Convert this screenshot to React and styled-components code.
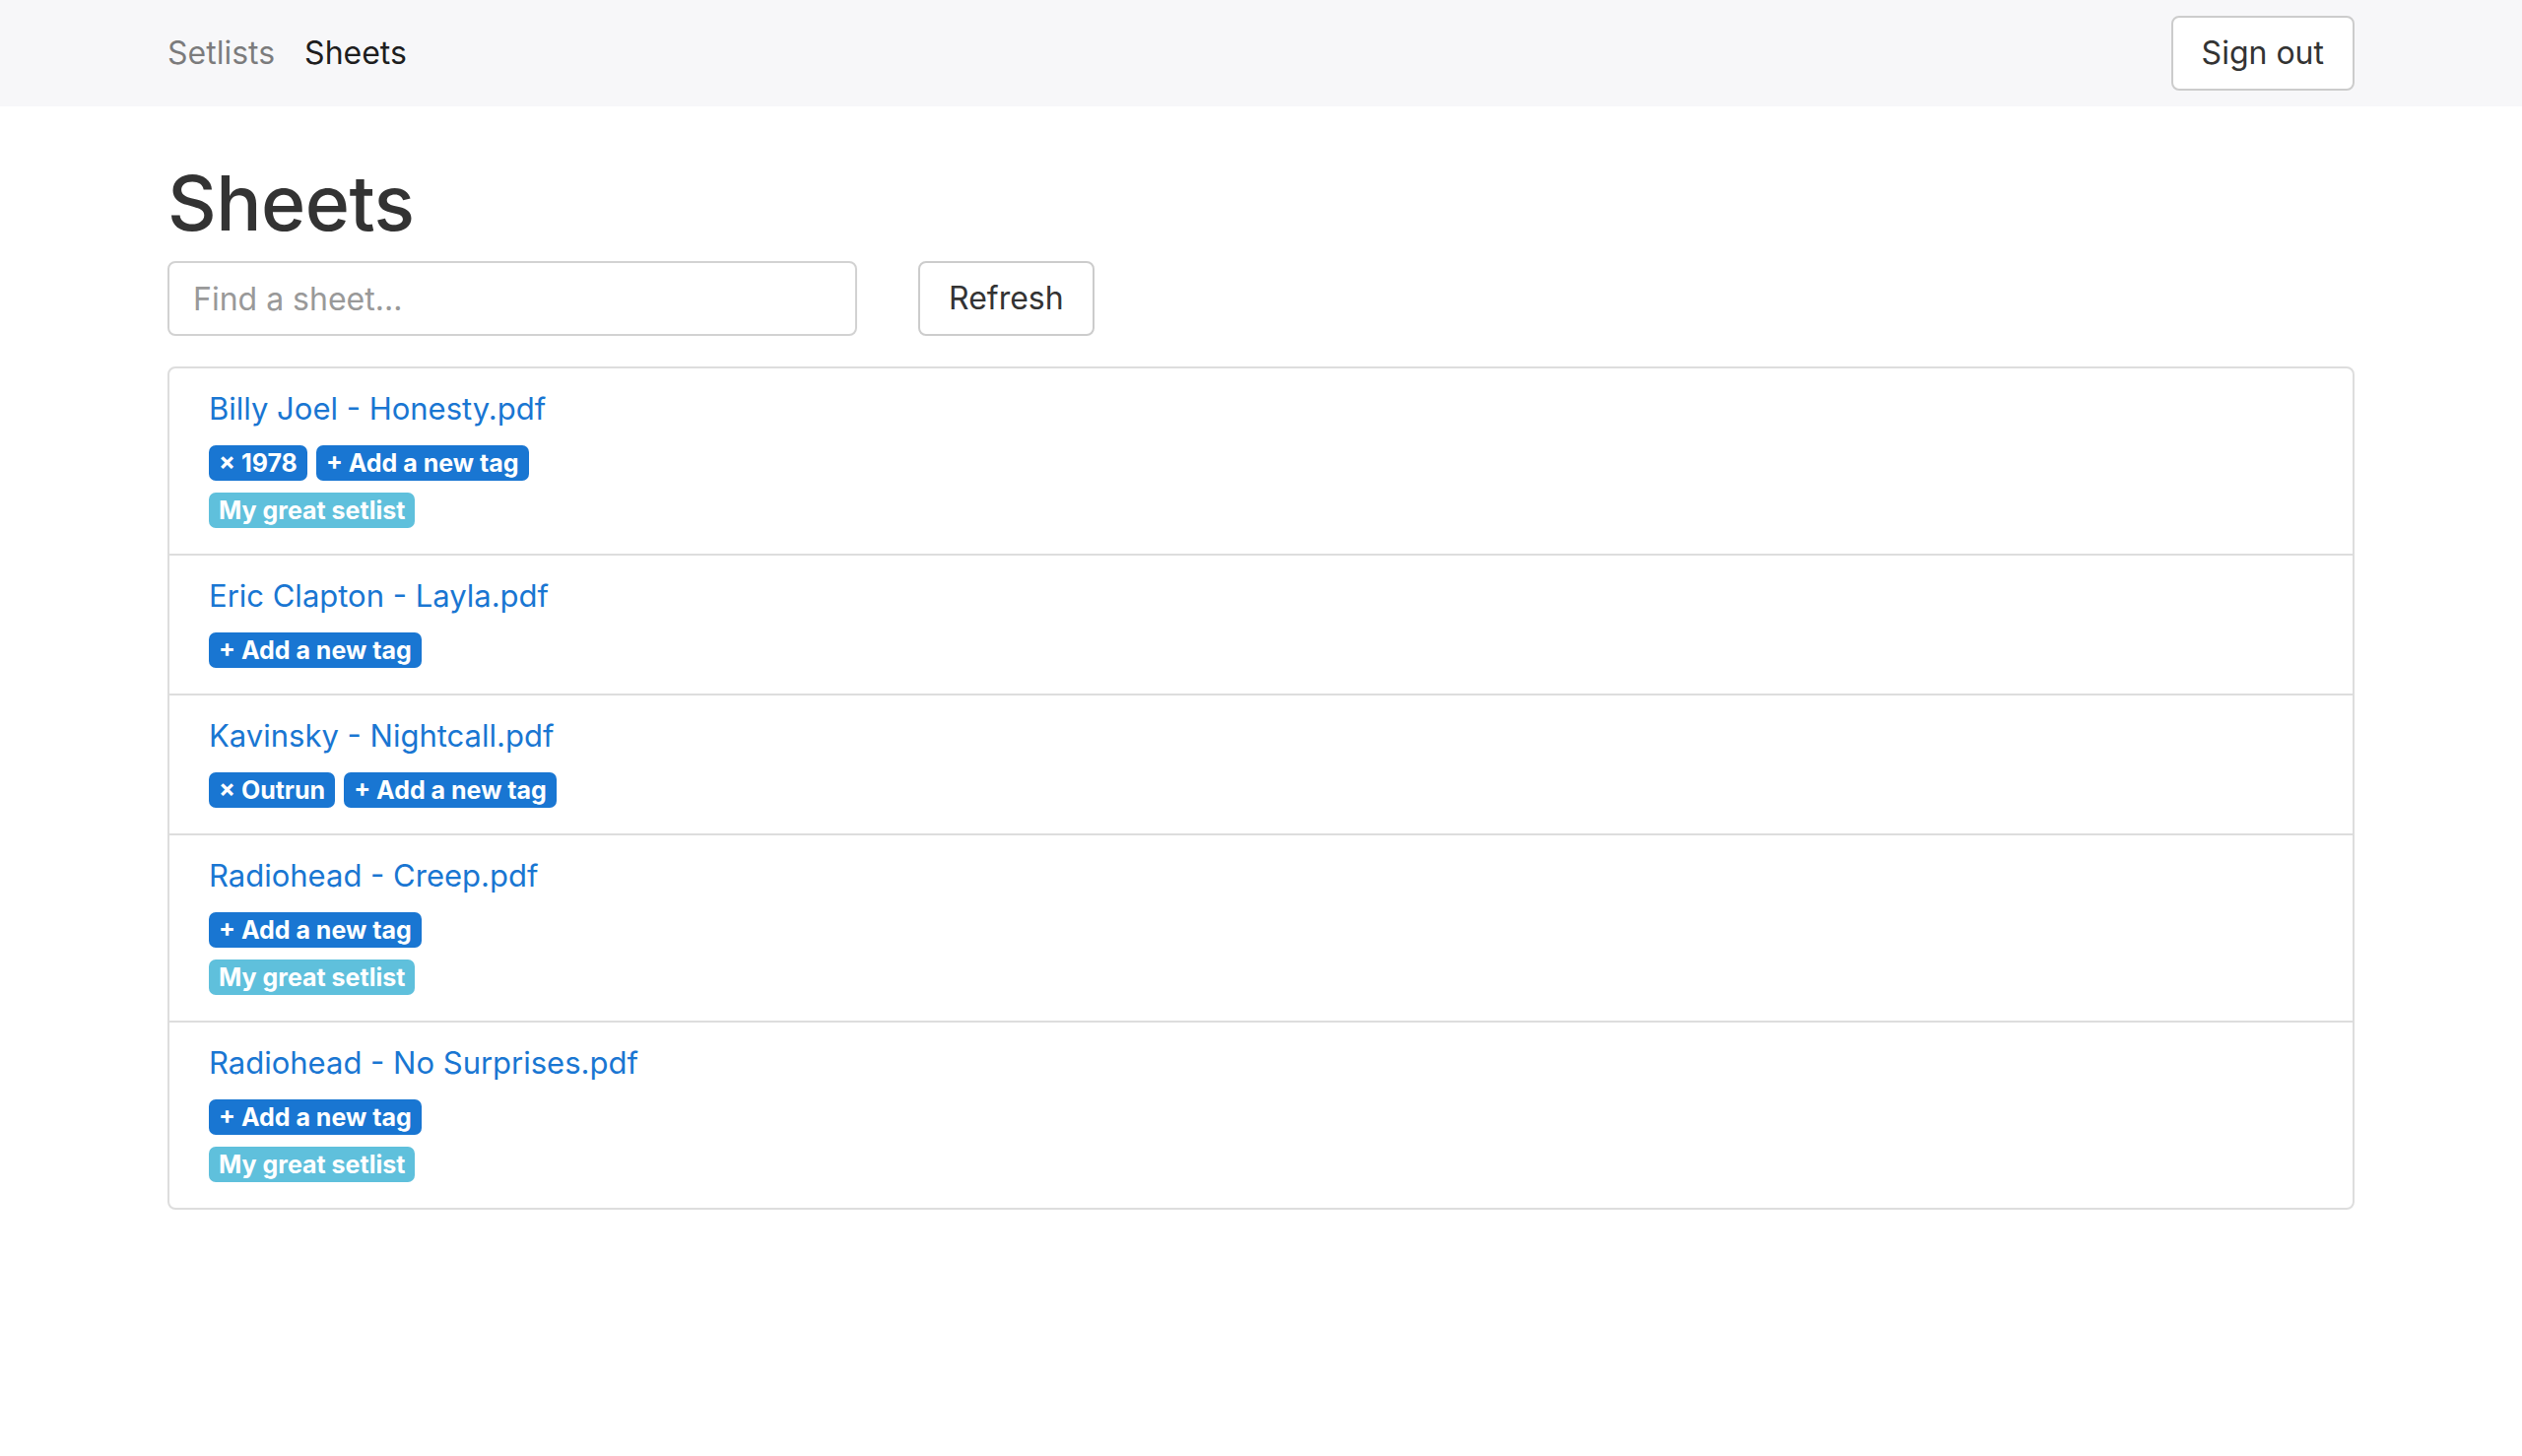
import React from "react";
import styled, { createGlobalStyle } from "styled-components";

const GlobalStyle = createGlobalStyle`
  body {
    margin: 0;
    background: #fff;
    color: #212529;
    font-family: Inter, "Noto Sans", "Liberation Sans", sans-serif;
    font-size: 32px;
    line-height: 1.5;
  }
  * { box-sizing: border-box; }
`;

const sheets = [
  { name: "Billy Joel - Honesty.pdf", tags: ["1978"], setlists: ["My great setlist"] },
  { name: "Eric Clapton - Layla.pdf", tags: [], setlists: [] },
  { name: "Kavinsky - Nightcall.pdf", tags: ["Outrun"], setlists: [] },
  { name: "Radiohead - Creep.pdf", tags: [], setlists: ["My great setlist"] },
  { name: "Radiohead - No Surprises.pdf", tags: [], setlists: ["My great setlist"] },
];

const App = () => {
  return (
    <>
      <GlobalStyle />
      <Navbar>
        <Container>
          <NavInner>
            <NavLinks>
              <NavLink>Setlists</NavLink>
              <NavLink $active>Sheets</NavLink>
            </NavLinks>
            <Button>Sign out</Button>
          </NavInner>
        </Container>
      </Navbar>
      <Container>
        <Title>Sheets</Title>
        <SearchRow>
          <SearchInput placeholder="Find a sheet..." />
          <Button>Refresh</Button>
        </SearchRow>
        <List>
          {sheets.map((s) => (
            <Item key={s.name}>
              <SheetLink href="#">{s.name}</SheetLink>
              <Tags>
                <TagRow>
                  {s.tags.map((t) => (
                    <Badge key={t}>× {t}</Badge>
                  ))}
                  <Badge>+ Add a new tag</Badge>
                </TagRow>
                {s.setlists.length > 0 && (
                  <TagRow>
                    {s.setlists.map((l) => (
                      <Badge key={l} $info>{l}</Badge>
                    ))}
                  </TagRow>
                )}
              </Tags>
            </Item>
          ))}
        </List>
      </Container>
    </>
  );
};

const Navbar = styled.nav`
  background: #f7f7f9;
  padding: 16px 0;
`;

const Container = styled.div`
  max-width: 2280px;
  margin: 0 auto;
  padding: 0 30px;
`;

const NavInner = styled.div`
  display: flex;
  align-items: center;
  justify-content: space-between;
`;

const NavLinks = styled.div`
  display: flex;
  align-items: center;
  gap: 30px;
`;

const NavLink = styled.a`
  font-size: 32px;
  color: ${(p) => (p.$active ? "rgba(0,0,0,.9)" : "rgba(0,0,0,.5)")};
  text-decoration: none;
  cursor: pointer;
`;

const Button = styled.button`
  height: 76px;
  padding: 0 29px;
  background: #fff;
  border: 2px solid #ccc;
  border-radius: 8px;
  color: #333;
  font-family: inherit;
  font-size: 32px;
  line-height: 1;
  cursor: pointer;
`;

const Title = styled.h1`
  margin: 50px 0 11px;
  font-size: 77px;
  font-weight: 500;
  line-height: 96px;
  color: #333;
  letter-spacing: -0.5px;
`;

const SearchRow = styled.div`
  display: flex;
  align-items: center;
  gap: 62px;
`;

const SearchInput = styled.input`
  width: 700px;
  height: 76px;
  padding: 0 24px;
  border: 2px solid #d2d2d2;
  border-radius: 8px;
  font-family: inherit;
  font-size: 32px;
  color: #495057;
  outline: none;

  &::placeholder {
    color: #999;
  }
`;

const List = styled.div`
  margin-top: 31px;
  border: 2px solid #ddd;
  border-radius: 8px;
`;

const Item = styled.div`
  padding: 22px 40px 26px;

  & + & {
    border-top: 2px solid #ddd;
  }
`;

const SheetLink = styled.a`
  display: block;
  font-size: 31px;
  line-height: 38px;
  color: #1976d2;
  text-decoration: none;
`;

const Tags = styled.div`
  display: flex;
  flex-direction: column;
  gap: 12px;
  margin-top: 18px;
`;

const TagRow = styled.div`
  display: flex;
  gap: 9px;
`;

const Badge = styled.span`
  display: inline-flex;
  align-items: center;
  height: 36px;
  padding: 0 10px;
  border-radius: 7px;
  background: ${(p) => (p.$info ? "#5fc0dc" : "#1976d2")};
  color: #fff;
  font-size: 25px;
  font-weight: 700;
  line-height: 1;
  cursor: pointer;
`;

export default App;
